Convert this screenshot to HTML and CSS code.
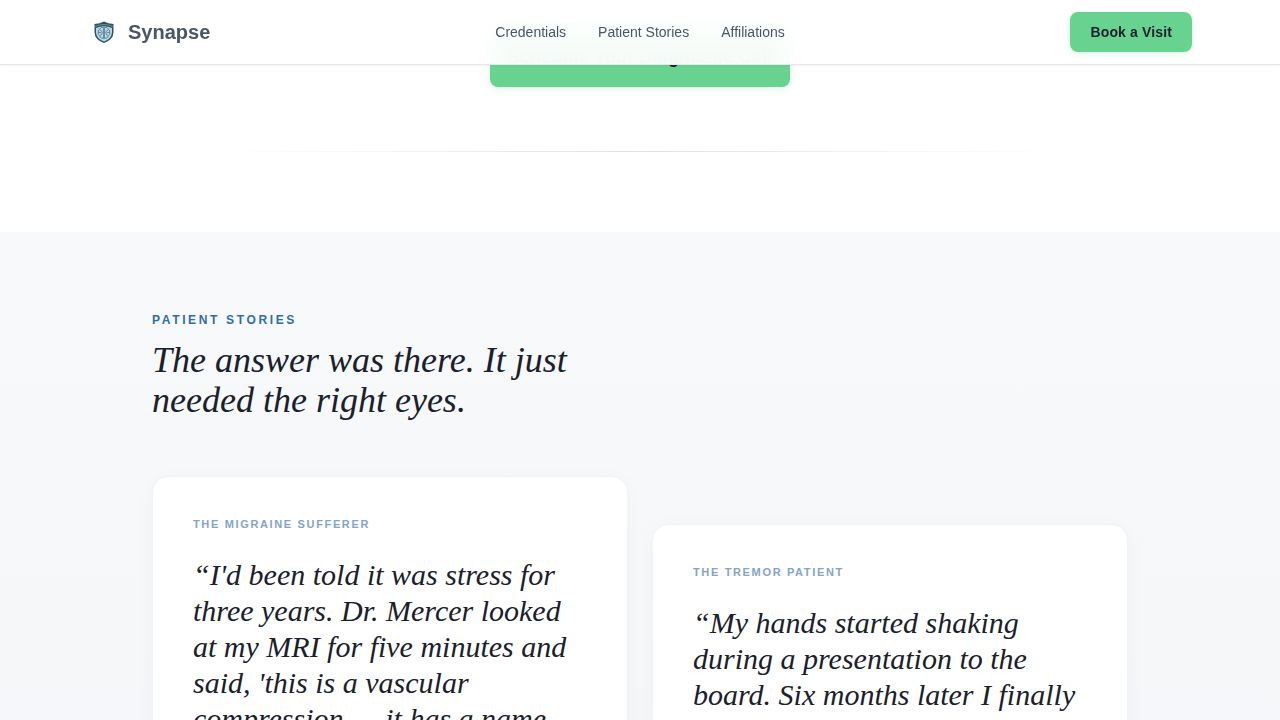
FILE: index.html
```html
<!DOCTYPE html>
<html lang="en">
<head>
    <meta charset="UTF-8">
    <meta name="viewport" content="width=device-width, initial-scale=1.0">
    <title>Synapse</title>
    <link rel="stylesheet" href="styles.css">
</head>
<body>
    <header class="site-header">
        <div class="header-inner">
            <a class="brand" href="#">
                <svg class="brand-logo" viewBox="0 0 32 32" aria-hidden="true">
                    <path d="M6.500 8 Q12 7.500 16 5.500 Q20 7.500 25.500 8 V16 Q25.500 23.500 16 27 Q6.500 23.500 6.500 16 Z" fill="#2c5064"/>
                    <path d="M8 12 Q16 8.500 24 12 V16 Q24 22.500 16 25.500 Q8 22.500 8 16 Z" fill="#b9d6e0"/>
                    <path d="M7 10.500 Q16 6.500 25 10.500" fill="none" stroke="#7fb0a8" stroke-width="0.7"/>
                    <g fill="none" stroke="#4b7a93" stroke-width="0.8">
                        <path d="M15.500 11.500 Q12.500 10.500 12 13 Q9.700 13.500 10.500 16 Q9.500 18.500 11.500 19.500 Q12 22.500 15.500 22.500 Z"/>
                        <path d="M16.500 11.500 Q19.500 10.500 20 13 Q22.300 13.500 21.500 16 Q22.500 18.500 20.500 19.500 Q20 22.500 16.500 22.500 Z"/>
                        <path d="M12 14 L14 15.500 V18 L12 19.500 M20 14 L18 15.500 V18 L20 19.500 M10.500 16.500 H13 M19 16.500 H21.500"/>
                    </g>
                </svg>
                <span>Synapse</span>
            </a>
            <nav class="nav">
                <a href="#credentials">Credentials</a>
                <a href="#stories">Patient Stories</a>
                <a href="#affiliations">Affiliations</a>
            </nav>
            <button class="btn btn-small" type="button">Book a Visit</button>
        </div>
    </header>
    <main>
        <section class="intro">
            <button class="btn btn-large" type="button">Schedule Your Diagnostic Call</button>
            <hr class="divider">
        </section>
        <section class="stories" id="stories">
            <div class="stories-inner">
                <p class="eyebrow">Patient Stories</p>
                <h2>The answer was there. It just needed the right eyes.</h2>
                <div class="cards">
                    <article class="card">
                        <h3>The Migraine Sufferer</h3>
                        <blockquote>“I'd been told it was stress for three years. Dr. Mercer looked at my MRI for five minutes and said, 'this is a vascular compression — it has a name, and we can treat it.'”</blockquote>
                    </article>
                    <article class="card card-lower">
                        <h3>The Tremor Patient</h3>
                        <blockquote>“My hands started shaking during a presentation to the board. Six months later I finally found answers.”</blockquote>
                    </article>
                </div>
            </div>
        </section>
    </main>
</body>
</html>
```
FILE: styles.css
```css
* {
    box-sizing: border-box;
}
body {
    margin: 0;
    font-family: "Liberation Sans", Arial, sans-serif;
    color: #1a202c;
    background: #fff;
}
h2, h3, p, blockquote {
    margin: 0;
}
a {
    color: inherit;
    text-decoration: none;
}
.site-header {
    position: fixed;
    top: 0;
    left: 0;
    right: 0;
    z-index: 10;
    background: rgba(255, 255, 255, 0.95);
    backdrop-filter: blur(12px);
    border-bottom: 1px solid #e5e7eb;
    box-shadow: 0 1px 2px rgba(0, 0, 0, 0.05);
}
.header-inner {
    display: grid;
    grid-template-columns: 1fr auto 1fr;
    align-items: center;
    max-width: 1152px;
    height: 64px;
    margin: 0 auto;
    padding: 0 24px;
}
.brand {
    display: flex;
    align-items: center;
    gap: 8px;
    font-size: 20px;
    font-weight: bold;
    color: #4a5568;
}
.brand-logo {
    width: 32px;
    height: 32px;
}
.nav {
    display: flex;
    gap: 32px;
    font-size: 14px;
    color: #4a5568;
}
.btn {
    border: none;
    border-radius: 8px;
    background: #68d391;
    color: #1a202c;
    font-family: inherit;
    font-weight: bold;
    letter-spacing: 0.01em;
    cursor: pointer;
    box-shadow: 0 2px 8px rgba(104, 211, 145, 0.2);
}
.btn-small {
    justify-self: end;
    padding: 12px 20px;
    font-size: 14px;
    line-height: 16px;
}
.btn-large {
    min-width: 300px;
    padding: 20px 16px;
    font-size: 18px;
    line-height: 20px;
}
.intro {
    display: flex;
    flex-direction: column;
    align-items: center;
    gap: 64px;
    padding: 27px 24px 80px;
}
.divider {
    width: 100%;
    max-width: 832px;
    height: 1px;
    margin: 0;
    border: none;
    background: linear-gradient(to right, transparent, #dde2e8, transparent);
}
.stories {
    padding: 80px 24px;
    background: linear-gradient(#f7f9fa, #f4f6f9);
}
.stories-inner {
    max-width: 976px;
    margin: 0 auto;
}
.eyebrow {
    margin-bottom: 12px;
    font-size: 12px;
    line-height: 16px;
    font-weight: bold;
    letter-spacing: 0.22em;
    text-transform: uppercase;
    color: #2f6ea8;
}
h2 {
    max-width: 480px;
    margin-bottom: 56px;
    font: italic 36px/40px "Liberation Serif", "Times New Roman", serif;
}
.cards {
    display: grid;
    grid-template-columns: 1fr 1fr;
    align-items: start;
    gap: 24px;
}
.card {
    padding: 40px;
    border: 1px solid #f0f2f5;
    border-radius: 16px;
    background: #fff;
    box-shadow: 0 4px 20px rgba(26, 32, 44, 0.03);
}
.card-lower {
    margin-top: 48px;
}
.card h3 {
    margin-bottom: 26px;
    font-size: 11px;
    line-height: 14px;
    letter-spacing: 0.15em;
    text-transform: uppercase;
    color: #83a4c8;
}
.card blockquote {
    font: italic 30px/36px "Liberation Serif", "Times New Roman", serif;
}
```
